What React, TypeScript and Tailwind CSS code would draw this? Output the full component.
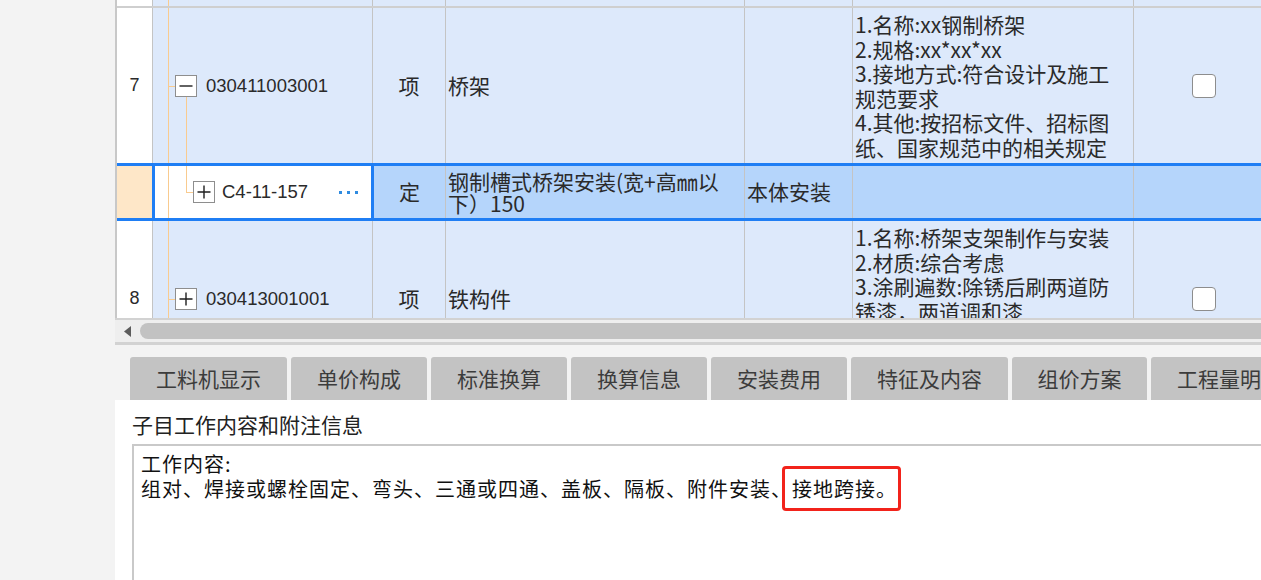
const cellBorder = "border-r border-[#c4c4c4]";
const treeLine = "bg-[#f9cb8f]";

const tabs = [
  { label: "工料机显示", w: "w-[157px]" },
  { label: "单价构成", w: "w-[136px]" },
  { label: "标准换算", w: "w-[136px]" },
  { label: "换算信息", w: "w-[136px]" },
  { label: "安装费用", w: "w-[136px]" },
  { label: "特征及内容", w: "w-[157px]" },
  { label: "组价方案", w: "w-[135px]" },
  { label: "工程量明细", w: "w-[157px]" },
];

const row7Features = [
  "1.名称:xx钢制桥架",
  "2.规格:xx*xx*xx",
  "3.接地方式:符合设计及施工",
  "规范要求",
  "4.其他:按招标文件、招标图",
  "纸、国家规范中的相关规定",
];

const row8Features = [
  "1.名称:桥架支架制作与安装",
  "2.材质:综合考虑",
  "3.涂刷遍数:除锈后刷两道防",
  "锈漆，两道调和漆",
  "4.其他:按招标文件、招标图",
  "纸、国家规范中的相关规定",
];

function TreeBox({ open }: { open?: boolean }) {
  return (
    <span className="relative z-10 flex h-[22px] w-[22px] shrink-0 items-center justify-center border border-[#8e8e8e] bg-white">
      <svg width="14" height="14" viewBox="0 0 14 14" fill="none">
        <path d={open ? "M0.5 7h13" : "M0.5 7h13M7 0.5v13"} stroke="#1f1f1f" strokeWidth="1.4" />
      </svg>
    </span>
  );
}

function Check() {
  return <span className="block h-[24px] w-[24px] rounded-[4px] border border-[#8d8d8d] bg-white" />;
}

function Features({ lines }: { lines: string[] }) {
  return (
    <div className={`flex w-[281px] shrink-0 flex-col justify-center overflow-hidden pl-[2px] text-[21px] leading-[24.5px] ${cellBorder}`}>
      {lines.map((l) => (
        <div key={l} className="whitespace-nowrap">
          {l}
        </div>
      ))}
    </div>
  );
}

function ItemRow({ num, code, name, lines, open }: { num: string; code: string; name: string; lines: string[]; open?: boolean }) {
  return (
    <div className="flex h-[155px] shrink-0 bg-[#dde9fb]">
      <div className={`flex w-[36px] shrink-0 items-center justify-center bg-white font-['Liberation_Sans',sans-serif] text-[18px] ${cellBorder}`}>
        {num}
      </div>
      <div className={`relative flex w-[220px] shrink-0 items-center pl-[22px] ${cellBorder}`}>
        <span className={`absolute bottom-0 left-[15px] top-0 w-px ${treeLine}`} />
        <span className={`absolute left-[15px] top-1/2 h-px w-[7px] ${treeLine}`} />
        {open && <span className={`absolute bottom-0 left-[33px] top-[calc(50%+11px)] w-px ${treeLine}`} />}
        <TreeBox open={open} />
        <span className="ml-[9px] font-['Liberation_Sans',sans-serif] text-[18.5px]">{code}</span>
      </div>
      <div className={`flex w-[73px] shrink-0 items-center justify-center text-[21px] ${cellBorder}`}>项</div>
      <div className={`flex w-[299px] shrink-0 items-center pl-[2px] text-[21px] ${cellBorder}`}>{name}</div>
      <div className={`w-[108px] shrink-0 ${cellBorder}`} />
      <Features lines={lines} />
      <div className="flex w-[140px] shrink-0 items-center justify-center">
        <Check />
      </div>
    </div>
  );
}

function SelectedRow() {
  return (
    <div className="flex h-[58px] shrink-0 border-y-[3px] border-[#1f7ef4] bg-[#b5d5fb]">
      <div className="w-[35px] shrink-0 bg-[#fee7c8]" />
      <div className="relative flex w-[222px] shrink-0 items-center border-x-[3px] border-[#1f7ef4] bg-white pl-[38px] pr-[13px]">
        <span className={`absolute bottom-0 left-[13px] top-0 w-px ${treeLine}`} />
        <span className={`absolute left-[31px] top-0 h-1/2 w-px ${treeLine}`} />
        <span className={`absolute left-[31px] top-1/2 h-px w-[7px] ${treeLine}`} />
        <TreeBox />
        <span className="ml-[7px] font-['Liberation_Sans',sans-serif] text-[18.5px]">C4-11-157</span>
        <span className="ml-auto flex gap-[5px]">
          <span className="h-[3px] w-[3px] bg-[#2f8be0]" />
          <span className="h-[3px] w-[3px] bg-[#2f8be0]" />
          <span className="h-[3px] w-[3px] bg-[#2f8be0]" />
        </span>
      </div>
      <div className={`flex w-[72px] shrink-0 items-center justify-center text-[21px] ${cellBorder}`}>定</div>
      <div className={`flex w-[299px] shrink-0 flex-col justify-center pl-[2px] text-[21px] leading-[22px] ${cellBorder}`}>
        <div className="whitespace-nowrap">钢制槽式桥架安装(宽+高㎜以</div>
        <div className="whitespace-nowrap">下）150</div>
      </div>
      <div className={`flex w-[108px] shrink-0 items-center pl-[2px] text-[21px] ${cellBorder}`}>本体安装</div>
      <div className={`w-[281px] shrink-0 ${cellBorder}`} />
      <div className="w-[140px] shrink-0" />
    </div>
  );
}

export default function App() {
  return (
    <div className="flex h-[580px] w-[1261px] overflow-hidden bg-[#f3f3f3] font-['Noto_Sans_CJK_SC',sans-serif] text-[#2a2a2a]">
      <div className="w-[115px] shrink-0" />
      <div className="flex min-w-0 flex-1 flex-col">
        {/* grid */}
        <div className="flex h-[318px] shrink-0 flex-col overflow-hidden border-l-2 border-[#c8c8c8] bg-white">
          <div className="flex h-[8px] shrink-0 border-b-2 border-[#cfcfcf] bg-[#dde9fb]">
            <div className={`w-[36px] shrink-0 bg-white ${cellBorder}`} />
            <div className={`relative w-[220px] shrink-0 ${cellBorder}`}>
              <span className={`absolute bottom-0 left-[15px] top-0 w-px ${treeLine}`} />
            </div>
            <div className={`w-[73px] shrink-0 ${cellBorder}`} />
            <div className={`w-[299px] shrink-0 ${cellBorder}`} />
            <div className={`w-[108px] shrink-0 ${cellBorder}`} />
            <div className={`w-[281px] shrink-0 ${cellBorder}`} />
          </div>
          <ItemRow num="7" code="030411003001" name="桥架" lines={row7Features} open />
          <SelectedRow />
          <ItemRow num="8" code="030413001001" name="铁构件" lines={row8Features} />
        </div>

        {/* horizontal scrollbar */}
        <div className="flex h-[27px] shrink-0 items-center border-b-[3px] border-t-2 border-[#d2d2d2] bg-[#eeeeee]">
          <svg className="ml-[9px]" width="7" height="11" viewBox="0 0 7 11">
            <path d="M7 0v11L0 5.5z" fill="#5c5c5c" />
          </svg>
          <div className="ml-[9px] h-[16px] flex-1 rounded-l-full bg-[#c2c2c2]" />
        </div>

        {/* tabs */}
        <div className="flex h-[55px] shrink-0 items-end gap-[4px] pl-[15px]">
          {tabs.map((t) => (
            <div
              key={t.label}
              className={`flex h-[43px] shrink-0 items-center justify-center rounded-t-[3px] bg-[#c3c3c3] text-[21px] text-[#3c3c3c] ${t.w}`}
            >
              {t.label}
            </div>
          ))}
        </div>

        {/* detail panel */}
        <div className="flex min-h-0 flex-1 flex-col bg-white pl-[17px] pt-[10px]">
          <div className="text-[21px] leading-[28px] text-[#222]">子目工作内容和附注信息</div>
          <div className="mt-[6px] flex-1 border-l-2 border-t-2 border-[#c9c9c9] pl-[7px] pt-[6px] text-[20px] leading-[24.5px] tracking-[1px] text-[#111]">
            <div>工作内容:</div>
            <div className="whitespace-nowrap">
              组对、焊接或螺栓固定、弯头、三通或四通、盖板、隔板、附件安装、
              <span className="relative inline-block">
                接地跨接。
                <span className="absolute -bottom-[10px] -left-[10px] -right-[4px] -top-[11px] rounded-[4px] border-[3px] border-[#f2231b]" />
              </span>
            </div>
          </div>
        </div>
      </div>
    </div>
  );
}
